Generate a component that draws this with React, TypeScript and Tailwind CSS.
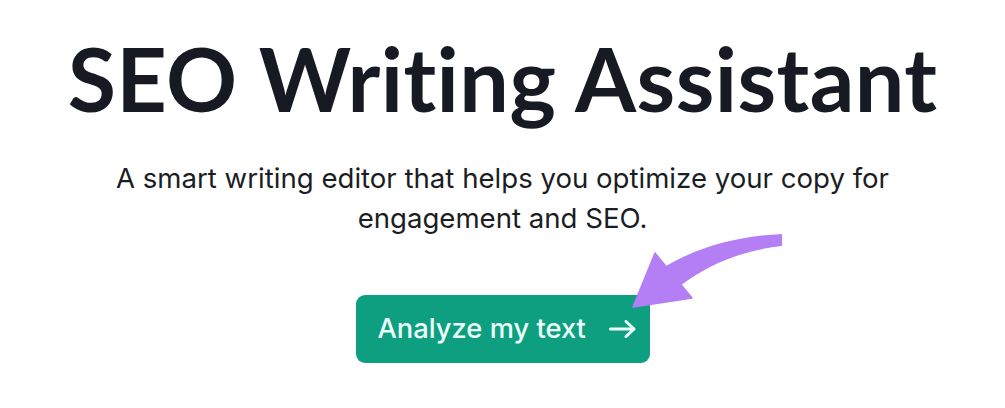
export default function App() {
  return (
    <div className="relative w-[1005px] h-[408px] overflow-hidden bg-white flex flex-col items-center text-[#171a22]">
      <h1
        className="mt-[30px] text-[88px] leading-[96px] font-bold tracking-[0.4px]"
        style={{ fontFamily: "Lato, 'Noto Sans', sans-serif" }}
      >
        SEO Writing Assistant
      </h1>

      <p
        className="mt-[32px] w-[820px] text-center text-[27.6px] leading-[40px] text-[#1b1d24]"
        style={{ fontFamily: "Inter, 'Noto Sans', sans-serif" }}
      >
        A smart writing editor that helps you optimize your copy for engagement and SEO.
      </p>

      <button
        className="mt-[57px] h-[68px] w-[294px] rounded-[9px] bg-[#0e9e80] flex items-center pl-[22px] text-[#ecfff9] text-[27.3px] font-medium"
        style={{ fontFamily: "Inter, 'Noto Sans', sans-serif" }}
      >
        <span>Analyze my text</span>
        <svg className="ml-[23px]" width="27" height="18" viewBox="0 0 27 18" fill="none">
          <path d="M1.5 9 H25 M17 1.5 L25 9 L17 16.5" stroke="currentColor" strokeWidth="3" strokeLinecap="round" strokeLinejoin="round" />
        </svg>
      </button>

      {/* purple pointer arrow */}
      <svg className="absolute left-0 top-0 pointer-events-none" width="1005" height="408" viewBox="0 0 1005 408">
        <path
          d="M782 234 C 740 236, 700 246, 666 266 L 680 286 C 712 262, 745 250, 782 246 Z"
          fill="#b47ef5"
        />
        <path d="M633 307 L 655 253 L 692 298 Z" fill="#b47ef5" stroke="#b47ef5" strokeWidth="1.5" strokeLinejoin="round" />
      </svg>
    </div>
  );
}
